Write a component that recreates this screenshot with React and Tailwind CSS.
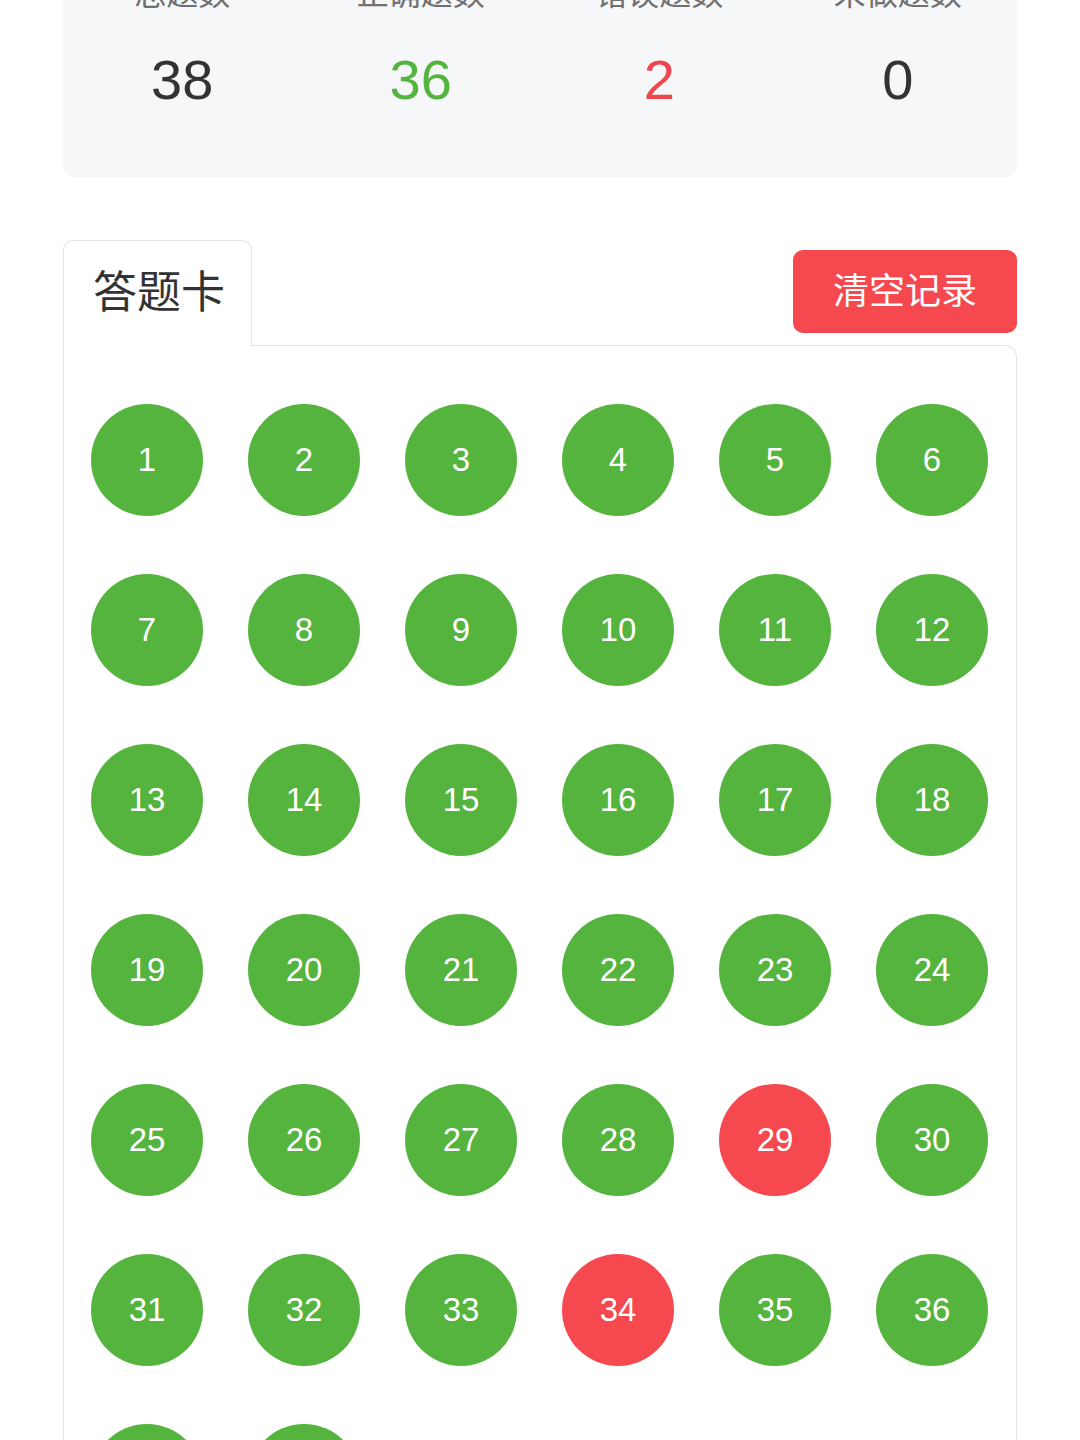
import React from "react";

const font = { fontFamily: '"Liberation Sans", "Noto Sans CJK SC", sans-serif' };

const stats = [
  { label: "总题数", value: "38", cls: "text-[#333333]" },
  { label: "正确题数", value: "36", cls: "text-[#55b43f]" },
  { label: "错误题数", value: "2", cls: "text-[#f0474f]" },
  { label: "未做题数", value: "0", cls: "text-[#333333]" },
];

const wrong = new Set([29, 34]);

export default function App() {
  const nums = Array.from({ length: 38 }, (_, i) => i + 1);
  return (
    <div className="w-[1080px] h-[1440px] overflow-hidden bg-white" style={font}>
      <div className="mx-[63px] mt-[-66px] rounded-[12px] bg-[#f6f7f9] pt-[40px] pb-[65px] grid grid-cols-4">
        {stats.map((s) => (
          <div key={s.label} className="flex flex-col items-center">
            <div className="text-[32px] leading-[40px] text-[#707070]">{s.label}</div>
            <div className={`mt-[34px] text-[56px] leading-[64px] ${s.cls}`}>{s.value}</div>
          </div>
        ))}
      </div>

      <div className="mx-[63px] mt-[63px]">
        <div className="flex items-start justify-between">
          <div className="relative z-10 -mb-px h-[106px] w-[189px] rounded-t-[10px] border border-b-0 border-[#e4e4e4] bg-white flex items-center pl-[29px] pb-[2px]">
            <span className="text-[44px] leading-none text-[#333333]">答题卡</span>
          </div>
          <button className="mt-[10px] h-[83px] w-[224px] rounded-[10px] bg-[#f5484f] text-white text-[36px] flex items-center justify-center">
            清空记录
          </button>
        </div>
        <div className="rounded-tr-[12px] border border-b-0 border-[#e4e4e4] pt-[58px] pl-[27px] pb-[40px]">
          <div className="flex flex-wrap gap-x-[45px] gap-y-[58px]">
            {nums.map((n) => (
              <div
                key={n}
                className={`w-[112px] h-[112px] rounded-full flex items-center justify-center text-white text-[33px] ${
                  wrong.has(n) ? "bg-[#f5484f]" : "bg-[#55b43d]"
                }`}
              >
                {n}
              </div>
            ))}
          </div>
        </div>
      </div>
    </div>
  );
}
